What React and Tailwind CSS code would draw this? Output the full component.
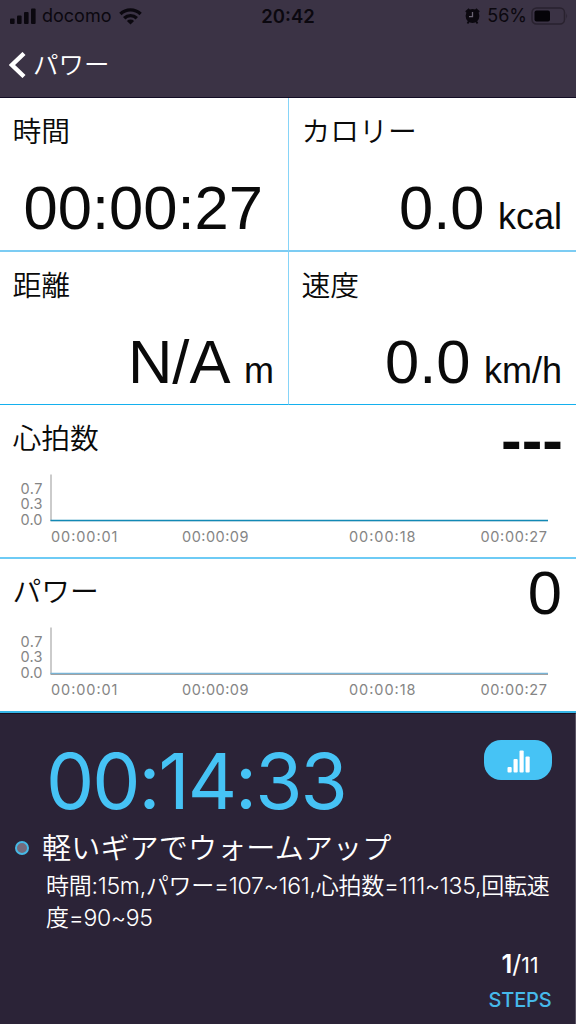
const UI_FONT = 'font-[Inter,"Noto_Sans_CJK_JP",sans-serif]';

const metrics = [
  { label: '時間', value: '00:00:27' },
  { label: 'カロリー', value: '0.0', unit: 'kcal' },
  { label: '距離', value: 'N/A', unit: 'm' },
  { label: '速度', value: '0.0', unit: 'km/h' },
];

const yTicks = [
  { label: '0.7', y: 23.7 },
  { label: '0.3', y: 39 },
  { label: '0.0', y: 54.5 },
];

const xTicks = [
  { label: '00:00:01', x: 51 },
  { label: '00:00:09', x: 182 },
  { label: '00:00:18', x: 349 },
  { label: '00:00:27', x: 480.5 },
];

function StatusBar() {
  return (
    <div className="flex h-8 items-center justify-between pr-[7px] pl-2.5 text-[#0b080f]">
      <div className="flex w-[200px] items-center">
        <svg width="26" height="17" viewBox="0 0 26 17" fill="currentColor">
          <rect x="0" y="10.5" width="4.6" height="5.5" rx="1" />
          <rect x="7" y="7.5" width="4.6" height="8.5" rx="1" />
          <rect x="14" y="4" width="4.6" height="12" rx="1" />
          <rect x="21" y="0.5" width="4.6" height="15.5" rx="1" />
        </svg>
        <span className="ml-1.5 text-[18px] leading-none">docomo</span>
        <svg className="ml-2" width="23" height="17" viewBox="0 0 23 17" fill="none" stroke="currentColor" strokeWidth="3.4">
          <path d="M1.4 6a14.4 14.4 0 0 1 20.2 0" />
          <path d="M5.2 10.2a9 9 0 0 1 12.6 0" />
          <path d="M11.5 16.6L7.9 13a5.1 5.1 0 0 1 7.2 0z" fill="currentColor" stroke="none" />
        </svg>
      </div>
      <span className="mr-[3px] text-[18.5px] leading-none font-semibold">20:42</span>
      <div className="flex w-[200px] items-center justify-end">
        <svg width="15" height="16" viewBox="0 0 15 16" fill="currentColor">
          <circle cx="7.5" cy="8" r="6.9" />
          <path d="M1 4.2L4.4 1.2M14 4.2L10.6 1.2" stroke="currentColor" strokeWidth="2.4" />
          <path d="M2.5 15.5L4 13M12.5 15.5L11 13" stroke="currentColor" strokeWidth="1.8" />
          <path d="M7.5 4V8.6H4" fill="none" stroke="#6b6474" strokeWidth="1.3" />
        </svg>
        <span className="ml-[7px] text-[18px] leading-none">56%</span>
        <svg className="ml-1" width="38" height="18" viewBox="0 0 38 18">
          <rect x="1" y="1" width="32.5" height="16" rx="4.5" fill="none" stroke="#29222f" strokeWidth="1.5" />
          <rect x="3.5" y="3.5" width="15.5" height="11" rx="2" fill="#050308" />
          <path d="M35.3 6.2q1.8 2.8 0 5.6z" fill="#29222f" />
        </svg>
      </div>
    </div>
  );
}

function Header() {
  return (
    <header className="h-[98px] border-b border-[#130d25] bg-[#3b3345]">
      <StatusBar />
      <div className="flex h-[65px] items-center pl-[9px] text-white">
        <svg width="17" height="26" viewBox="0 0 17 26" fill="none" stroke="currentColor" strokeWidth="4.4">
          <path d="M15 1.5L3 13l12 11.5" />
        </svg>
        <h1 className="ml-[7px] text-[25.5px] leading-none font-[350]">パワー</h1>
      </div>
    </header>
  );
}

function Metric({ label, value, unit }) {
  return (
    <div className="flex h-full flex-col justify-between pt-[19px] pr-[14px] pb-[10px] pl-[12.5px]">
      <div className="text-[28.8px] leading-[30px] font-[350]">{label}</div>
      <div className={`text-right font-['Liberation_Sans',Arial,sans-serif] text-[61.5px] leading-[64px] whitespace-nowrap ${unit ? '' : 'pr-[11px]'}`}>
        {value}
        {unit && <span className="ml-[3.5px] text-[36px] leading-none"> {unit}</span>}
      </div>
    </div>
  );
}

function Chart({ lineColor, axisColor }) {
  return (
    <svg className="block" width="576" height="87" viewBox="0 0 576 87" fill="#858585" fontSize="14.5">
      <path d="M51 4.5V51" stroke="#b5b5b5" strokeWidth="1.4" />
      <path d="M50.5 51.3H548" stroke={axisColor} strokeWidth="1" />
      <path d="M50.5 50.4H548" stroke={lineColor} strokeWidth="1.3" />
      {yTicks.map((t) => (
        <text key={t.label} x="42.5" y={t.y} textAnchor="end" textLength="22">{t.label}</text>
      ))}
      {xTicks.map((t) => (
        <text key={t.label} x={t.x} y="72" textLength="66.5">{t.label}</text>
      ))}
    </svg>
  );
}

function ChartPanel({ label, value, headClass, valueClass, lineColor, axisColor }) {
  return (
    <section className="h-[152px]">
      <div className={`flex items-start justify-between pr-[14px] pl-[12.5px] ${headClass}`}>
        <div className="text-[28.8px] leading-[30px] font-[350]">{label}</div>
        <div className={valueClass}>{value}</div>
      </div>
      <Chart lineColor={lineColor} axisColor={axisColor} />
    </section>
  );
}

function Workout() {
  return (
    <section className="flex h-[311px] flex-col border-t border-r border-t-[#171020] border-r-[#5a5364] bg-[#2b2337] text-white">
      <div className="flex items-start justify-between pt-[26px] pr-[23px] pl-[46px]">
        <div className="mt-px text-[76.5px] leading-[80px] tracking-[-2px] text-[#46c3f5]">00:14:33</div>
        <button className="flex h-10 w-[68px] items-center justify-center rounded-[17px] bg-[#46c3f5]">
          <svg className="mt-0.5" width="23" height="23" viewBox="0 0 23 23" fill="#fff">
            <rect x="0.5" y="17" width="4.2" height="5.5" rx="1" />
            <rect x="6.5" y="9" width="4.2" height="13.5" rx="1" />
            <rect x="12.5" y="0.5" width="4.2" height="22" rx="1" />
            <rect x="18.5" y="6.5" width="4.2" height="16" rx="1" />
          </svg>
        </button>
      </div>
      <div className="mt-[10px] flex items-center pl-[15px]">
        <span className="mb-0.5 size-[14px] rounded-full border-2 border-[#46b9e6] bg-[#756b7c]" />
        <h2 className="ml-[13px] text-[29.1px] leading-[36px] font-[350] tracking-[0.1px] whitespace-nowrap">軽いギアでウォームアップ</h2>
      </div>
      <p className="mt-[3px] ml-[46px] text-[23px] leading-8 font-[350] tracking-[-0.27px] whitespace-nowrap">
        時間:15m,パワー=107~161,心拍数=111~135,回転速
        <br />
        度=90~95
      </p>
      <div className="mt-auto mr-[22px] mb-3 flex w-[66px] flex-col items-center self-end">
        <div className="text-[21px] leading-[30px]">
          <span className="text-[25.5px] font-semibold">1</span>
          <span className="text-[25px]">/</span>11
        </div>
        <div className="mt-[7px] text-[20px] leading-6 font-medium tracking-[-0.2px] text-[#46b9ea]">STEPS</div>
      </div>
    </section>
  );
}

export default function App() {
  return (
    <div className={`${UI_FONT} h-[1024px] w-[576px] overflow-hidden bg-white text-[#0a0a0a]`}>
      <Header />
      <div className="grid grid-cols-[289px_287px] grid-rows-[154px_153px]">
        {metrics.map((m, i) => (
          <div
            key={m.label}
            className={`${i % 2 === 0 ? 'border-r border-r-[#86d4f8]' : ''} ${i < 2 ? 'border-b-2 border-b-[#7cccf3]' : 'border-b border-b-[#14b0ee]'}`}
          >
            <Metric {...m} />
          </div>
        ))}
      </div>
      <ChartPanel
        label="心拍数"
        value="---"
        headClass="h-[65px] pt-[19px]"
        valueClass="text-[62px] leading-[60px] font-bold -mt-[14px] -mr-px font-['Liberation_Sans',Arial,sans-serif]"
        lineColor="#1289b5"
        axisColor="#a5ccdc"
      />
      <div className="h-[2px] bg-[#6ecbf5]" />
      <ChartPanel
        label="パワー"
        value="0"
        headClass="h-[64px] pt-[18px]"
        valueClass="text-[61.5px] leading-[60px] -mt-[14px] font-['Liberation_Sans',Arial,sans-serif]"
        lineColor="#78b4d6"
        axisColor="#8b8b8b"
      />
      <div className="h-[2px] bg-[#36b5e6]" />
      <Workout />
    </div>
  );
}
